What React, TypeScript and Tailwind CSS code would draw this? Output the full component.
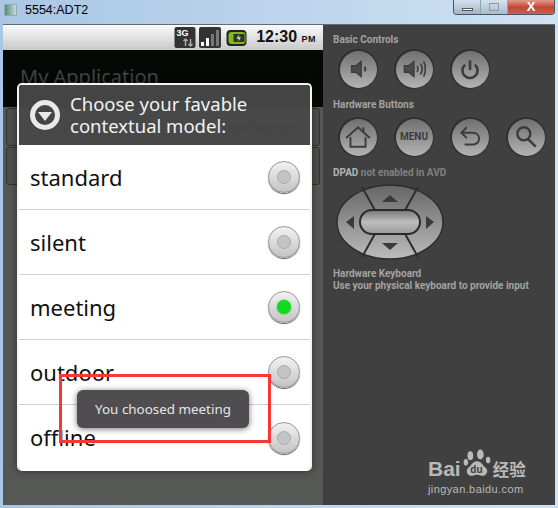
import React from "react";

const MODES = [
    { name: "standard", on: false },
    { name: "silent", on: false },
    { name: "meeting", on: true },
    { name: "outdoor", on: false },
    { name: "offline", on: false },
];

function Radio({ on }: { on: boolean }) {
    return (
        <div className="w-8 h-8 rounded-full border border-[#999] bg-gradient-to-b from-[#f2f2f2] to-[#c4c4c4] shadow-[0_1px_1px_#666] flex justify-center items-center">
            {on ? (
                <div className="w-[14px] h-[14px] rounded-full bg-[#0fdc1e] shadow-[0_0_2px_#2c2]" />
            ) : (
                <div className="w-[14px] h-[14px] rounded-full border border-[#aaa] bg-[#c4c4c4]" />
            )}
        </div>
    );
}

function RoundButton({ children }: { children: React.ReactNode }) {
    return (
        <div className="w-10 h-10 rounded-full bg-[#303030] flex justify-center items-center">
            <div className="w-[37px] h-[37px] rounded-full bg-gradient-to-b from-[#707070] to-[#b4b4b4] flex justify-center items-center text-[#3c3c3c]">
                {children}
            </div>
        </div>
    );
}

function Ico({ children }: { children: React.ReactNode }) {
    return (
        <svg width="28" height="28" viewBox="0 0 26 26" fill="none" stroke="#3c3c3c" strokeWidth="2">
            {children}
        </svg>
    );
}

function Label({ children, className = "" }: { children: React.ReactNode; className?: string }) {
    return <p className={"text-[10px] leading-3 font-bold text-[#a3a3a3] " + className}>{children}</p>;
}

function Dpad() {
    return (
        <svg width="108" height="76" viewBox="0 0 108 76">
            <defs>
                <linearGradient id="pad" x1="0" y1="0" x2="0" y2="1">
                    <stop offset="0" stopColor="#666" />
                    <stop offset="1" stopColor="#bcbcbc" />
                </linearGradient>
                <linearGradient id="mid" x1="0" y1="0" x2="0" y2="1">
                    <stop offset="0" stopColor="#777" />
                    <stop offset="0.5" stopColor="#bdbdbd" />
                    <stop offset="1" stopColor="#9a9a9a" />
                </linearGradient>
            </defs>
            <ellipse cx="54" cy="38" rx="53" ry="37" fill="url(#pad)" stroke="#2e2e2e" strokeWidth="1.5" />
            <path d="M26 3 L40 28 M82 3 L68 28 M26 73 L40 48 M82 73 L68 48" stroke="#2e2e2e" strokeWidth="2" />
            <rect x="24" y="26" width="60" height="24" rx="12" fill="url(#mid)" stroke="#2a2a2a" strokeWidth="2" />
            <path d="M54 11 L62 18 L46 18 Z M54 66 L62 59 L46 59 Z M10 38 L18 32 L18 45 Z M98 38 L90 32 L90 45 Z" fill="#3a3a3a" />
        </svg>
    );
}

export default function App() {
    return (
        <div className="relative w-[558px] h-[508px] overflow-hidden flex flex-col bg-gradient-to-r from-[#a9c6e4] via-[#bcd4ec] to-[#cfe2f3] font-['Noto_Sans',sans-serif]">
            {/* window title bar */}
            <div className="h-6 shrink-0 flex items-start justify-between pr-[3px]">
                <div className="flex items-center pl-[4px] pt-[3px] gap-2">
                    <div className="w-[13px] h-[12px] bg-gradient-to-r from-[#4d8f7c] to-[#cfd6dc] border border-[#9aa]" />
                    <span className="text-[12.5px] leading-[14px] text-black font-['Liberation_Sans',sans-serif]">5554:ADT2</span>
                </div>
                <div className="flex h-[15px] w-[102px] rounded-b-[4px] overflow-hidden border border-t-0 border-[#4a5560]">
                    <div className="w-[27px] flex justify-center items-end pb-[3px] bg-gradient-to-b from-[#d5e2ee] to-[#9fb4c8] border-r border-[#8aa]">
                        <div className="w-[11px] h-[3px] bg-white border border-[#555]" />
                    </div>
                    <div className="w-[27px] flex justify-center items-center bg-gradient-to-b from-[#d5e2ee] to-[#a9bccd] border-r border-[#8aa]">
                        <div className="w-[10px] h-[8px] border border-[#8a9aa8]" />
                    </div>
                    <div className="flex-1 flex justify-center items-center bg-gradient-to-b from-[#e09a8c] via-[#c4453a] to-[#c9604e] text-white font-bold text-[13px] leading-3 font-['Liberation_Sans',sans-serif]">
                        X
                    </div>
                </div>
            </div>

            <div className="flex-1 min-h-0 mx-[3px] mb-[3px] flex border-t border-[#5e6b78]">
                {/* device screen */}
                <div className="relative w-[320px] bg-[#555855] flex flex-col overflow-hidden">
                    <div className="h-[25px] shrink-0 bg-gradient-to-b from-[#fafafa] to-[#c9c9c9] flex items-center justify-end gap-[3px] pr-[7px]">
                        <svg width="22" height="21" viewBox="0 0 21 21">
                            <rect x="0" y="0" width="21" height="21" rx="2" fill="#333" />
                            <text x="2" y="9" fontSize="9" fontWeight="bold" fill="#fff" fontFamily="Liberation Sans">3G</text>
                            <path d="M11 12v7M9 14l2-2 2 2M16 12v7M14 17l2 2 2-2" stroke="#aaa" strokeWidth="1.5" fill="none" />
                        </svg>
                        <svg width="22" height="21" viewBox="0 0 22 21">
                            <rect width="22" height="21" rx="2" fill="#333" />
                            <rect x="2" y="15" width="3" height="4" fill="#fff" />
                            <rect x="7" y="11" width="3" height="8" fill="#fff" />
                            <rect x="12" y="7" width="3" height="12" fill="#777" />
                            <rect x="17" y="3" width="3" height="16" fill="#777" />
                        </svg>
                        <svg width="23" height="16" viewBox="0 0 22 16" className="ml-[1px]">
                            <rect x="1" y="0" width="20" height="16" rx="4" fill="#222" />
                            <rect x="3" y="2" width="17" height="12" rx="3" fill="#7fb81f" />
                            <rect x="8" y="4" width="11" height="8" fill="#333" />
                            <path d="M14 4.500l-3 4h2.500l-1 3 3-4h-2.500z" fill="#fff" />
                        </svg>
                        <span className="ml-[5px] text-[16px] leading-5 font-bold text-[#111] font-['Liberation_Sans',sans-serif] whitespace-nowrap">
                            12:30 <span className="text-[9px] tracking-[0.5px]">PM</span>
                        </span>
                    </div>
                    <div className="h-[57px] shrink-0 bg-[#040906] pl-[17px] pt-[15px] text-[20px] leading-6 text-[#444]">My Application</div>
                    <div className="flex gap-[1px] px-[3px] pt-[1px]">
                        <div className="flex-1 h-[38px] rounded-[3px] border border-[#333] bg-[#4d504d] flex items-center pl-[20px] text-[14px] text-[#222]">SHOWN</div>
                        <div className="flex-1 h-[38px] rounded-[3px] border border-[#333] bg-[#4d504d] flex items-center justify-end pr-[20px] text-[14px] text-[#222]">Notification</div>
                    </div>
                    <div className="flex gap-[1px] px-[3px] pt-[1px]">
                        <div className="flex-1 h-[38px] rounded-[3px] border border-[#333] bg-[#4d504d]" />
                    </div>

                    {/* dialog sits over the dimmed app */}
                    <div className="absolute left-[14px] top-[58px] w-[295px] h-[388px] rounded-[5px] overflow-hidden border-t-2 border-x-2 border-[#f4f4f4] shadow-[0_0_8px_rgba(0,0,0,0.45)]">
                        <div className="h-[60px] bg-[#484848]/95 flex items-center pl-[11px] gap-[10px]">
                            <div className="w-[30px] h-[30px] rounded-full bg-[#444] border-[5px] border-[#e9e9e9] flex justify-center items-center">
                                <div className="w-0 h-0 mt-[3px] border-x-[7px] border-x-transparent border-t-[9px] border-t-[#e9e9e9]" />
                            </div>
                            <p className="text-[18.5px] leading-[22px] text-[#f2f2f2]">
                                Choose your favable
                                <br />
                                contextual model:
                            </p>
                        </div>
                        <div className="bg-white h-[326px]">
                            {MODES.map((m, i) => (
                                <div key={m.name} className={"h-[65px] flex items-center justify-between pl-[11px] pr-[10px] " + (i < 4 ? "border-b border-[#d0d0d0]" : "")}>
                                    <span className="text-[22px] text-[#111]">{m.name}</span>
                                    <Radio on={m.on} />
                                </div>
                            ))}
                        </div>
                    </div>

                    <div className="absolute left-[74px] top-[365px] w-[172px] h-[38px] rounded-[6px] bg-[#4f4d4f] shadow-[0_1px_6px_rgba(0,0,0,0.55)] flex justify-center items-center text-[13.4px] text-[#e6e6e6]">
                        You choosed meeting
                    </div>
                </div>

                {/* emulator controls */}
                <div className="flex-1 bg-[#404040] pl-[10px] pt-[9px] flex flex-col font-['Roboto',sans-serif]">
                    <Label>Basic Controls</Label>
                    <div className="flex gap-4 pl-[5px] mt-[3px]">
                        <RoundButton>
                            <Ico>
                                <path d="M7 10h4l5-4v14l-5-4H7z" fill="#4a4a4a" stroke="#3c3c3c" strokeWidth="1.2" />
                                <path d="M19 11c1 1 1 3 0 4" />
                            </Ico>
                        </RoundButton>
                        <RoundButton>
                            <Ico>
                                <path d="M4 10h4l5-4v14l-5-4H4z" fill="#4a4a4a" stroke="#3c3c3c" strokeWidth="1.2" />
                                <path d="M16 10c1 2 1 4 0 6M19 8c2 3 2 7 0 10M22 6c2 4 2 10 0 14" strokeWidth="1.5" />
                            </Ico>
                        </RoundButton>
                        <RoundButton>
                            <Ico>
                                <path d="M13 5v9" strokeWidth="2.4" />
                                <path d="M8.500 9a7 7 0 1 0 9 0" strokeWidth="2.4" />
                            </Ico>
                        </RoundButton>
                    </div>

                    <Label className="mt-[10px]">Hardware Buttons</Label>
                    <div className="flex gap-4 pl-[5px] mt-[6px]">
                        <RoundButton>
                            <Ico>
                                <path d="M2 14L13 4l11 10M6 13v9h14v-9M18 4v5" strokeWidth="1.8" />
                            </Ico>
                        </RoundButton>
                        <RoundButton>
                            <span className="text-[10px] leading-3 font-bold">MENU</span>
                        </RoundButton>
                        <RoundButton>
                            <Ico>
                                <path d="M10 4L5 9l5 5M5 9h11a5.500 5.500 0 0 1 0 11H8" strokeWidth="1.8" />
                            </Ico>
                        </RoundButton>
                        <RoundButton>
                            <Ico>
                                <circle cx="11" cy="10" r="6" strokeWidth="2.2" />
                                <path d="M15 15l7 7" strokeWidth="2.4" />
                            </Ico>
                        </RoundButton>
                    </div>

                    <Label className="mt-[10px]">
                        <span className="text-[#b4b4b4]">DPAD</span> <span className="text-[#808080]">not enabled in AVD</span>
                    </Label>
                    <div className="mt-[5px] ml-[3px]">
                        <Dpad />
                    </div>
                    <Label className="mt-[8px]">Hardware Keyboard</Label>
                    <p className="text-[10px] leading-3 font-bold text-[#a3a3a3]">Use your physical keyboard to provide input</p>
                </div>
            </div>

            {/* red annotation around the toast */}
            <div className="absolute left-[59px] top-[374px] w-[212px] h-[69px] border-[3px] border-[#f83838]" />

            {/* watermark */}
            <div className="absolute left-[428px] top-[448px] flex flex-col items-start text-[#b9b9b9]">
                <div className="flex items-end h-[31px]">
                    <span className="text-[21px] leading-[20px] font-bold font-['Liberation_Sans',sans-serif]">Bai</span>
                    <svg width="32" height="30" viewBox="0 0 24 27">
                        <ellipse cx="6" cy="6" rx="2.600" ry="4" fill="#b9b9b9" />
                        <ellipse cx="15" cy="5" rx="3" ry="4.500" fill="#b9b9b9" />
                        <ellipse cx="22" cy="10" rx="2" ry="3" fill="#b9b9b9" />
                        <ellipse cx="2" cy="12" rx="2" ry="3" fill="#b9b9b9" />
                        <path d="M12 11c4 0 5 4 8 6 3 3 0 8-4 7-3-1-5-1-8 0-4 1-7-4-4-7 3-2 4-6 8-6z" fill="#b9b9b9" />
                        <text x="6" y="22" fontSize="9" fontWeight="bold" fill="#404040" fontFamily="Liberation Sans">du</text>
                    </svg>
                    <span className="text-[16.5px] leading-[20px] font-bold font-['Noto_Sans_CJK_SC',sans-serif]">经验</span>
                </div>
                <span className="mt-[3px] text-[11px] leading-[14px] tracking-[0.4px] font-['Liberation_Sans',sans-serif]">jingyan.baidu.com</span>
            </div>
        </div>
    );
}
